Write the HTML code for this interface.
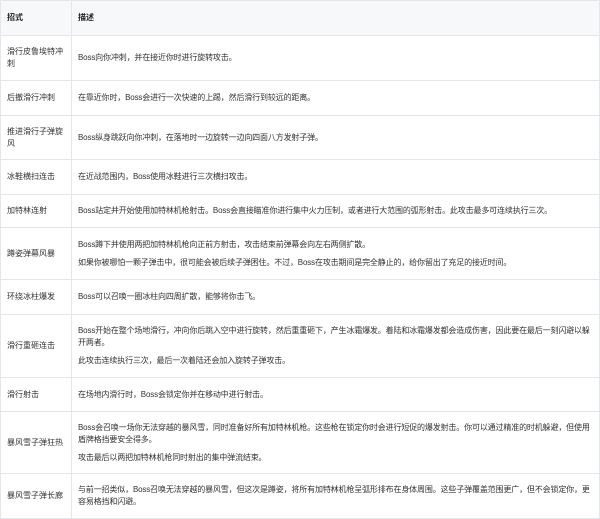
<!DOCTYPE html><html><head><meta charset="utf-8"><style>
body{margin:0;background:#fff;font-family:"Liberation Sans","Noto Sans CJK SC",sans-serif;font-size:8px;color:#333;}
table{border-collapse:collapse;width:600px;table-layout:fixed;}
td,th{border:1px solid #e3e6ea;padding:0 2px 0 6px;vertical-align:middle;line-height:12px;text-align:left;}
th{background:#f6f8fa;font-weight:bold;color:#222;height:34px;}
td+td{letter-spacing:-0.15px;}
td p{margin:0;}
td p+p{margin-top:6px;}
.c1{width:62px;}
</style></head><body><table>
<tr style="height:34px"><th class="c1">招式</th><th>描述</th></tr>
<tr style="height:45px"><td>滑行皮鲁埃特冲刺</td><td>Boss向你冲刺，并在接近你时进行旋转攻击。</td></tr>
<tr style="height:35px"><td>后撤滑行冲刺</td><td>在靠近你时，Boss会进行一次快速的上踢，然后滑行到较远的距离。</td></tr>
<tr style="height:44px"><td>推进滑行子弹旋风</td><td>Boss纵身跳跃向你冲刺，在落地时一边旋转一边向四面八方发射子弹。</td></tr>
<tr style="height:35px"><td>冰鞋横扫连击</td><td>在近战范围内，Boss使用冰鞋进行三次横扫攻击。</td></tr>
<tr style="height:33px"><td>加特林连射</td><td>Boss站定并开始使用加特林机枪射击。Boss会直接瞄准你进行集中火力压制，或者进行大范围的弧形射击。此攻击最多可连续执行三次。</td></tr>
<tr style="height:52px"><td>蹲姿弹幕风暴</td><td><p>Boss蹲下并使用两把加特林机枪向正前方射击，攻击结束前弹幕会向左右两侧扩散。</p><p>如果你被哪怕一颗子弹击中，很可能会被后续子弹困住。不过，Boss在攻击期间是完全静止的，给你留出了充足的接近时间。</p></td></tr>
<tr style="height:35px"><td>环绕冰柱爆发</td><td>Boss可以召唤一圈冰柱向四周扩散，能够将你击飞。</td></tr>
<tr style="height:63px"><td>滑行重砸连击</td><td><p>Boss开始在整个场地滑行，冲向你后跳入空中进行旋转，然后重重砸下，产生冰霜爆发。着陆和冰霜爆发都会造成伤害，因此要在最后一刻闪避以躲开两者。</p><p>此攻击连续执行三次，最后一次着陆还会加入旋转子弹攻击。</p></td></tr>
<tr style="height:34px"><td>滑行射击</td><td>在场地内滑行时，Boss会锁定你并在移动中进行射击。</td></tr>
<tr style="height:62px"><td>暴风雪子弹狂热</td><td><p>Boss会召唤一场你无法穿越的暴风雪，同时准备好所有加特林机枪。这些枪在锁定你时会进行短促的爆发射击。你可以通过精准的时机躲避，但使用盾牌格挡要安全得多。</p><p>攻击最后以两把加特林机枪同时射出的集中弹流结束。</p></td></tr>
<tr style="height:45px"><td>暴风雪子弹长廊</td><td>与前一招类似，Boss召唤无法穿越的暴风雪，但这次是蹲姿，将所有加特林机枪呈弧形排布在身体周围。这些子弹覆盖范围更广，但不会锁定你，更容易格挡和闪避。</td></tr>
</table></body></html>
